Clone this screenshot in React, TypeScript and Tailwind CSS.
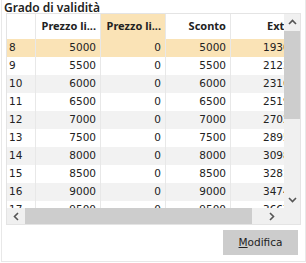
const rows = [
  { n: 8, a: 5000, c: 5000, e: 19300 },
  { n: 9, a: 5500, c: 5500, e: 21230 },
  { n: 10, a: 6000, c: 6000, e: 23160 },
  { n: 11, a: 6500, c: 6500, e: 25190 },
  { n: 12, a: 7000, c: 7000, e: 27020 },
  { n: 13, a: 7500, c: 7500, e: 28950 },
  { n: 14, a: 8000, c: 8000, e: 30980 },
  { n: 15, a: 8500, c: 8500, e: 32810 },
  { n: 16, a: 9000, c: 9000, e: 34740 },
  { n: 17, a: 9500, c: 9500, e: 36670 },
];

function Chevron({ dir }: { dir: "up" | "down" | "left" | "right" }) {
  const d = {
    up: "M2 7 L5.5 3.5 L9 7",
    down: "M2 4 L5.5 7.5 L9 4",
    left: "M7 2 L3.5 5.5 L7 9",
    right: "M4 2 L7.5 5.5 L4 9",
  }[dir];
  return (
    <svg width="11" height="11" viewBox="0 0 11 11">
      <path d={d} fill="none" stroke="#555" strokeWidth="1.6" />
    </svg>
  );
}

export default function App() {
  const data = "font-['DejaVu_Sans',sans-serif] text-[10.5px] text-[#222]";
  return (
    <div className="w-[306px] h-[263px] bg-white">
      <div className="ml-px w-[305px] h-[262px] border-x border-b border-[#e8e8e8] flex flex-col">
        <div className="h-[13px] pl-[2px] font-['Noto_Sans',sans-serif] font-semibold text-[12px] leading-[15px] text-[#222]">
          Grado di validità
        </div>

        <div className="ml-[4px] w-[295px] h-[212px] border border-[#e4e4e4] bg-white flex flex-col relative">
          <div className="flex h-[194px]">
            <div className="w-[277px] overflow-hidden">
              <div className="w-[400px]">
                {/* header */}
                <div className="flex h-[25px] font-['Noto_Sans',sans-serif] font-bold text-[11px] text-[#222]">
                  <div className="w-[29px] shrink-0 border-r border-[#e8e8e8]" />
                  <div className="w-[65px] shrink-0 border-r border-[#e8e8e8] flex items-center justify-end pr-[4px]">
                    Prezzo li...
                  </div>
                  <div className="w-[65px] shrink-0 border-r border-[#e8e8e8] bg-[#fae3b6] flex items-center justify-end pr-[4px]">
                    Prezzo li...
                  </div>
                  <div className="w-[65px] shrink-0 border-r border-[#e8e8e8] flex items-center justify-end pr-[4px]">
                    Sconto
                  </div>
                  <div className="w-[65px] shrink-0 flex items-center pl-[36px]">
                    Extra
                  </div>
                </div>
                {/* rows */}
                {rows.map((r, i) => {
                  const bg =
                    i === 0 ? "bg-[#fae3b6]" : i % 2 === 0 ? "bg-[#f2f2f2]" : "bg-white";
                  return (
                    <div key={r.n} className={`flex h-[18px] items-center ${bg} ${data}`}>
                      <div className="w-[29px] h-full shrink-0 border-r border-[#e8e8e8] pl-[2px] flex items-center">
                        {r.n}
                      </div>
                      <div className="w-[65px] h-full shrink-0 border-r border-[#e8e8e8] pr-[4px] flex items-center justify-end">
                        {r.a}
                      </div>
                      <div className="w-[65px] h-full shrink-0 border-r border-[#e8e8e8] pr-[4px] flex items-center justify-end">
                        0
                      </div>
                      <div className="w-[65px] h-full shrink-0 border-r border-[#e8e8e8] pr-[4px] flex items-center justify-end">
                        {r.c}
                      </div>
                      <div className="w-[65px] h-full shrink-0 pl-[32px] flex items-center">
                        {r.e}
                      </div>
                    </div>
                  );
                })}
              </div>
            </div>

            {/* vertical scrollbar */}
            <div className="w-[16px] bg-[#f0f0f0] flex flex-col">
              <div className="h-[17px] flex items-center justify-center">
                <Chevron dir="up" />
              </div>
              <div className="h-[88px] bg-[#cdcdcd]" />
              <div className="flex-1" />
              <div className="h-[17px] flex items-center justify-center">
                <Chevron dir="down" />
              </div>
            </div>
          </div>

          {/* horizontal scrollbar */}
          <div className="flex h-[16px] bg-[#f0f0f0]">
            <div className="w-[277px] flex">
              <div className="w-[18px] flex items-center justify-center">
                <Chevron dir="left" />
              </div>
              <div className="w-[227px] bg-[#cdcdcd]" />
              <div className="flex-1 flex items-center justify-center pl-[6px]">
                <Chevron dir="right" />
              </div>
            </div>
            <div className="flex-1" />
          </div>
        </div>

        <div className="flex justify-end pr-[7px] mt-[5px]">
          <button className="w-[75px] h-[25px] bg-[#cccccc] font-['DejaVu_Sans',sans-serif] text-[10.5px] text-[#222]">
            <span className="underline">M</span>odifica
          </button>
        </div>
      </div>
    </div>
  );
}
